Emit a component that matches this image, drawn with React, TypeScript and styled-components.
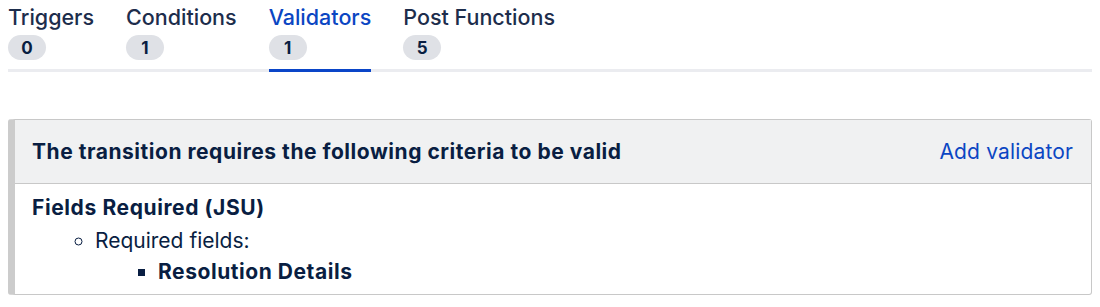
import styled, { createGlobalStyle } from "styled-components";

const GlobalStyle = createGlobalStyle`
  body {
    margin: 0;
    background: #ffffff;
    font-family: Inter, "Noto Sans", "Liberation Sans", sans-serif;
    color: #172b4d;
  }
`;

const tabs = [
  { label: "Triggers", count: 0 },
  { label: "Conditions", count: 1 },
  { label: "Validators", count: 1, active: true },
  { label: "Post Functions", count: 5 },
];

const App = () => {
  return (
    <Page>
      <GlobalStyle />
      <TabList>
        {tabs.map((tab) => (
          <Tab key={tab.label} $active={!!tab.active}>
            <TabTitle $active={!!tab.active}>{tab.label}</TabTitle>
            <Badge>{tab.count}</Badge>
          </Tab>
        ))}
      </TabList>
      <Panel>
        <PanelHeader>
          <HeaderTitle>The transition requires the following criteria to be valid</HeaderTitle>
          <HeaderLink href="#">Add validator</HeaderLink>
        </PanelHeader>
        <PanelBody>
          <RuleName>Fields Required (JSU)</RuleName>
          <CircleList>
            <li>
              Required fields:
              <SquareList>
                <FieldItem>Resolution Details</FieldItem>
              </SquareList>
            </li>
          </CircleList>
        </PanelBody>
      </Panel>
    </Page>
  );
};

const Page = styled.div`
  padding: 5px 8px 0;
`;

const TabList = styled.div`
  display: flex;
  gap: 32px;
  border-bottom: 3px solid #ebecf0;
`;

const Tab = styled.div<{ $active: boolean }>`
  display: flex;
  flex-direction: column;
  align-items: flex-start;
  gap: 6px;
  padding-bottom: 9px;
  margin-bottom: -3px;
  border-bottom: 3px solid ${({ $active }) => ($active ? "#0a45c8" : "transparent")};
  cursor: pointer;
`;

const TabTitle = styled.span<{ $active: boolean }>`
  font-size: 21.5px;
  line-height: 24px;
  font-weight: 500;
  color: ${({ $active }) => ($active ? "#0b46c3" : "#1d2d4c")};
`;

const Badge = styled.span`
  display: inline-flex;
  align-items: center;
  justify-content: center;
  min-width: 38px;
  height: 25px;
  border-radius: 13px;
  background: #dfe1e6;
  font-size: 17px;
  font-weight: 700;
  color: #091e42;
`;

const Panel = styled.div`
  margin-top: 47px;
  border: 1px solid #c8c8c8;
  border-left: 7px solid #cccccc;
  border-radius: 3px;
`;

const PanelHeader = styled.div`
  display: flex;
  align-items: center;
  justify-content: space-between;
  height: 63px;
  padding: 0 18px 0 17px;
  background: #f0f1f2;
  border-bottom: 1px solid #c8c8c8;
`;

const HeaderTitle = styled.h3`
  margin: 0;
  font-size: 21px;
  letter-spacing: 0.53px;
  font-weight: 700;
  color: #091e42;
`;

const HeaderLink = styled.a`
  font-size: 21px;
  letter-spacing: 0.15px;
  color: #0b46c3;
  text-decoration: none;
`;

const PanelBody = styled.div`
  padding: 8px 17px 7px;
  font-size: 21px;
  line-height: 31px;
  color: #091e42;
`;

const RuleName = styled.div`
  margin-bottom: 2px;
  font-weight: 700;
  letter-spacing: 0.6px;
`;

const CircleList = styled.ul`
  margin: 0;
  padding-left: 63px;
  list-style: circle;
`;

const SquareList = styled.ul`
  margin: 0;
  padding-left: 63px;
  list-style: square;
`;

const FieldItem = styled.li`
  font-weight: 700;
  letter-spacing: 0.55px;
`;

export default App;
